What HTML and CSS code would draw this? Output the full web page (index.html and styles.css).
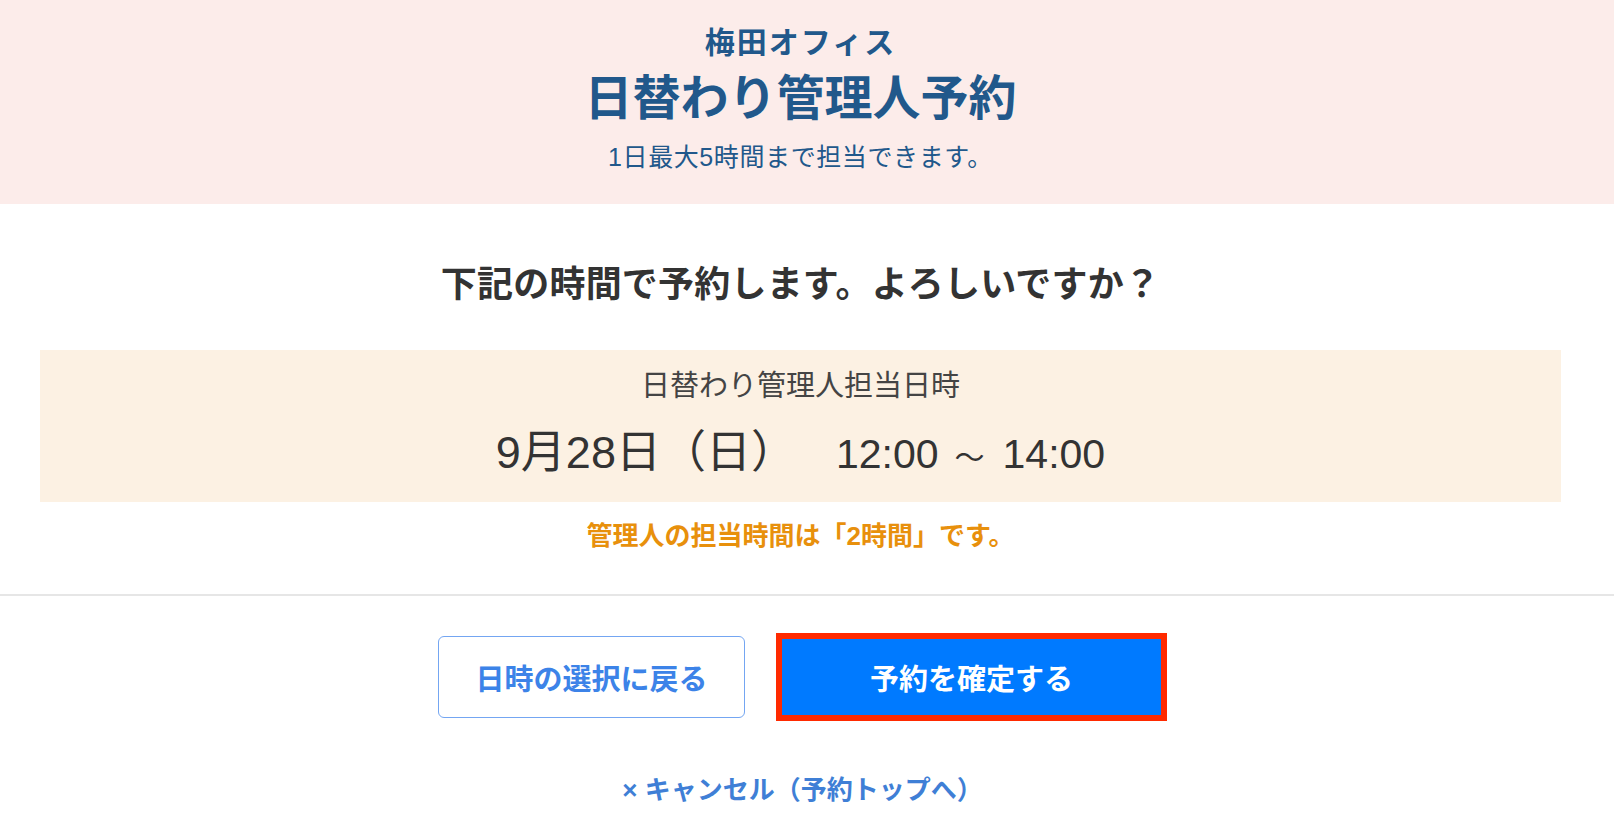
FILE: index.html
```html
<!DOCTYPE html>
<html lang="ja">
<head>
<meta charset="utf-8">
<title>日替わり管理人予約</title>
<link rel="stylesheet" href="styles.css">
</head>
<body>
<header class="hero">
  <div class="hero-inner">
    <p class="office">梅田オフィス</p>
    <h1 class="title">日替わり管理人予約</h1>
    <p class="note">1日最大5時間まで担当できます。</p>
  </div>
</header>
<main class="confirm">
  <h2 class="question">下記の時間で予約します。よろしいですか？</h2>
  <section class="slot">
    <p class="slot-label">日替わり管理人担当日時</p>
    <p class="slot-time"><span class="slot-date">9月28日（日）</span><span class="slot-hours">12:00<span class="slot-sep">～</span>14:00</span></p>
  </section>
  <p class="duration">管理人の担当時間は「2時間」です。</p>
</main>
<footer class="actions">
  <div class="buttons">
    <a class="btn btn-back" href="#">日時の選択に戻る</a>
    <a class="btn btn-confirm" href="#">予約を確定する</a>
  </div>
  <a class="cancel" href="#">× キャンセル（予約トップへ）</a>
</footer>
</body>
</html>
```
FILE: styles.css
```css
html, body {
  margin: 0;
  padding: 0;
  background: #ffffff;
}
body {
  font-family: "Liberation Sans", "Noto Sans CJK JP", sans-serif;
  color: #333333;
}
p, h1, h2 {
  margin: 0;
}
.hero {
  background: #fcecea;
  padding: 23px 0 30px;
}
.hero-inner {
  padding: 0 13px 0 0;
  display: flex;
  flex-direction: column;
  align-items: center;
  color: #21588b;
}
.office {
  font-size: 30px;
  line-height: 40px;
  font-weight: 700;
  letter-spacing: 2px;
}
.title {
  margin-top: 6px;
  font-size: 48px;
  line-height: 60px;
  font-weight: 700;
}
.note {
  margin-top: 11px;
  font-size: 25px;
  line-height: 34px;
  font-weight: 400;
  letter-spacing: 0.6px;
}
.confirm {
  padding: 0 53px 0 40px;
  display: flex;
  flex-direction: column;
  align-items: stretch;
  text-align: center;
}
.question {
  margin-top: 57px;
  font-size: 36px;
  line-height: 48px;
  font-weight: 700;
  color: #333333;
  letter-spacing: 0.2px;
}
.slot {
  margin-top: 41px;
  background: #fcf1e3;
  height: 152px;
  box-sizing: border-box;
  padding-top: 17px;
}
.slot-label {
  font-size: 29px;
  line-height: 38px;
  color: #444444;
}
.slot-time {
  margin-top: 22px;
  line-height: 52px;
  color: #333333;
  display: flex;
  justify-content: center;
  align-items: baseline;
}
.slot-date {
  font-size: 45px;
}
.slot-hours {
  font-size: 41px;
  margin-left: 40px;
}
.slot-sep {
  display: inline-block;
  font-size: 30px;
  margin: 0 18px 0 16px;
}
.duration {
  margin-top: 16px;
  font-size: 26px;
  line-height: 36px;
  font-weight: 700;
  color: #e8900c;
}
.actions {
  margin-top: 40px;
  border-top: 2px solid #e6e6e6;
  padding: 37px 13px 0 0;
  display: flex;
  flex-direction: column;
  align-items: center;
}
.buttons {
  display: flex;
  align-items: center;
  gap: 31px;
  padding-left: 4px;
}
.btn {
  display: flex;
  align-items: center;
  justify-content: center;
  text-decoration: none;
  font-size: 29px;
  font-weight: 700;
  box-sizing: border-box;
}
.btn-back {
  width: 307px;
  height: 82px;
  border: 1px solid #74a6f2;
  border-radius: 6px;
  color: #3c83e8;
  background: #ffffff;
}
.btn-confirm {
  width: 391px;
  height: 88px;
  border: 6px solid #ff2a00;
  background: #007aff;
  color: #ffffff;
}
.cancel {
  margin-top: 52px;
  font-size: 26px;
  line-height: 34px;
  font-weight: 700;
  color: #3f7fd6;
  text-decoration: none;
  padding-left: 4px;
}
```
